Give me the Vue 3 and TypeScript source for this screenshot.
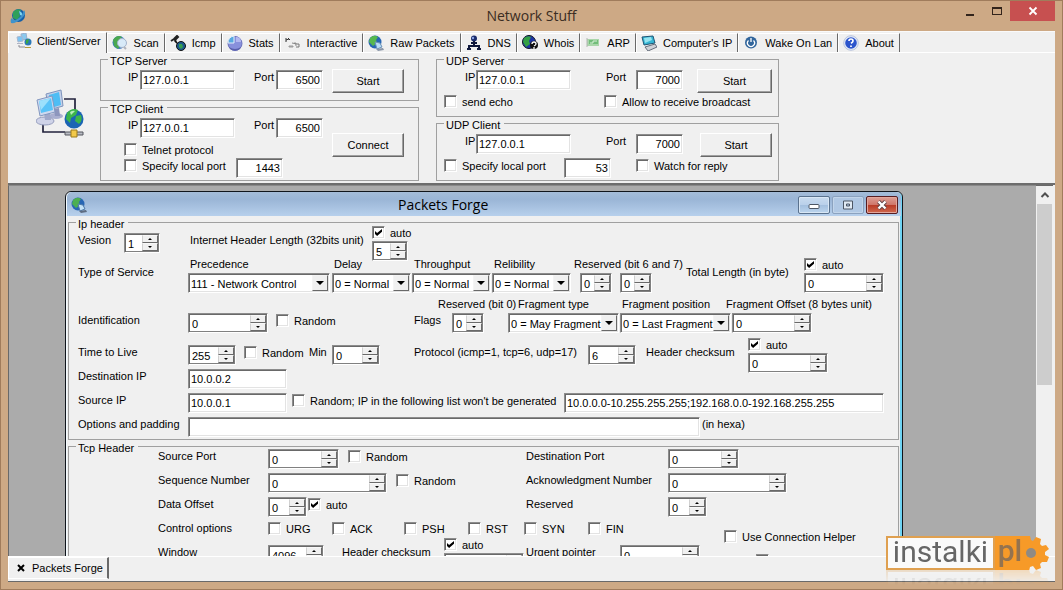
<script setup lang="ts">
import { defineComponent, h, ref } from 'vue'

interface Tab {
  id: string
  label: string
}

const tabs: Tab[] = [
  { id: 'client', label: 'Client/Server' },
  { id: 'scan', label: 'Scan' },
  { id: 'icmp', label: 'Icmp' },
  { id: 'stats', label: 'Stats' },
  { id: 'interactive', label: 'Interactive' },
  { id: 'raw', label: 'Raw Packets' },
  { id: 'dns', label: 'DNS' },
  { id: 'whois', label: 'Whois' },
  { id: 'arp', label: 'ARP' },
  { id: 'ip', label: "Computer's IP" },
  { id: 'wake', label: 'Wake On Lan' },
  { id: 'about', label: 'About' },
]
const activeTab = ref('client')

// Numeric box with a pair of stacked arrow buttons
const Spin = defineComponent({
  props: { id: { type: String, required: true }, start: { type: Number, default: 0 }, name: String },
  setup(props) {
    const value = ref(props.start)
    return () =>
      h('span', { class: 'spin' }, [
        h('input', {
          id: props.id,
          value: value.value,
          'aria-label': props.name,
          inputmode: 'numeric',
          onInput: (e: Event) => (value.value = Number((e.target as HTMLInputElement).value) || 0),
        }),
        h('span', { class: 'arrows' }, [
          h('button', { class: 'up', type: 'button', 'aria-label': 'Increase', onClick: () => value.value++ }),
          h('button', { class: 'down', type: 'button', 'aria-label': 'Decrease', onClick: () => value.value-- }),
        ]),
      ])
  },
})

const Combo = defineComponent({
  props: { id: { type: String, required: true }, option: { type: String, required: true } },
  setup(props) {
    return () => h('span', { class: 'combo' }, [h('select', { id: props.id }, [h('option', props.option)])])
  },
})

const Check = defineComponent({
  props: { label: { type: String, default: '' }, on: Boolean },
  setup(props) {
    const checked = ref(props.on)
    return () =>
      h('label', { class: 'check' }, [
        h('input', {
          type: 'checkbox',
          checked: checked.value,
          'aria-label': props.label || 'Option',
          onChange: (e: Event) => (checked.value = (e.target as HTMLInputElement).checked),
        }),
        props.label ? h('span', props.label) : null,
      ])
  },
})
</script>

<template>
  <div class="window">
    <header class="titlebar">
      <svg class="app-icon" viewBox="0 0 16 16" aria-hidden="true">
        <circle cx="8.5" cy="7.5" r="6.5" fill="#1560a8" />
        <path d="M3 4Q7 0 11 2L9 5l1 3-3 4-4-2z" fill="#2fa05a" />
        <path d="M9 3q4 1 3 5l-2-1z" fill="#7fd5ee" />
        <path d="M1 15q-1-4 1-5 1 3 4 2 6-3 8-10 3 4-3 9-6 5-10 4z" fill="#3f93cc" />
      </svg>
      <h1>Network Stuff</h1>
      <div class="caption-buttons">
        <button type="button" aria-label="Minimize">
          <svg width="12" height="12" viewBox="0 0 12 12"><path d="M2 9h8v2H2z" fill="#33241b" /></svg>
        </button>
        <button type="button" aria-label="Maximize">
          <svg width="12" height="12" viewBox="0 0 12 12"><path d="M1 2h10v8H1zM2 4v5h8V4z" fill="#33241b" fill-rule="evenodd" /></svg>
        </button>
        <button type="button" class="close" aria-label="Close">
          <svg width="10" height="10" viewBox="0 0 10 10"><path d="M1.5 1.5l7 7M8.5 1.5l-7 7" stroke="#fff" stroke-width="1.8" /></svg>
        </button>
      </div>
    </header>

    <nav class="tabs" role="tablist">
      <button
        v-for="tab in tabs"
        :key="tab.id"
        type="button"
        role="tab"
        class="tab"
        :class="{ active: tab.id === activeTab }"
        :aria-selected="tab.id === activeTab"
        @click="activeTab = tab.id"
      >
        <svg width="16" height="16" viewBox="0 0 16 16" aria-hidden="true">
          <template v-if="tab.id === 'client'">
            <path d="M5 1l5-1 1 6-5 1z" fill="#8ac9ee" stroke="#9ab0cc" />
            <path d="M1 4l5-1 1 5-5 1z" fill="#7cc4f2" stroke="#a8b8d0" />
            <path d="M1 10h6v1H1z" fill="#b0b4c4" />
            <circle cx="12" cy="9" r="3.5" fill="#2a78b8" />
            <path d="M10 7l3-1-1 4-2 1z" fill="#3ba744" />
            <path d="M3 12v2h6" fill="none" stroke="#8a8a94" />
            <path d="M9 14h6v1H9z" fill="#b79c3c" />
          </template>
          <template v-else-if="tab.id === 'scan'">
            <circle cx="7" cy="7.5" r="6.5" fill="#3a78c0" />
            <path d="M1 5q4-6 9-3L7 6l1 5-2 3-4-3z" fill="#4aa84e" />
            <circle cx="10" cy="8" r="4.5" fill="#d8eaf8" stroke="#a4b4cc" />
            <path d="M12 12l2 2" stroke="#b0b4bc" stroke-width="2" />
          </template>
          <template v-else-if="tab.id === 'icmp'">
            <path d="M1 6l3-2M4 4l3-3 1 1-3 3 1 2" fill="none" stroke="#222" stroke-width="2" />
            <path d="M5 6l4 4" stroke="#111" stroke-width="1.5" />
            <circle cx="11" cy="11" r="4.5" fill="#1e5a8c" stroke="#111" />
            <path d="M9 9h3l1 3-2 2-2-2z" fill="#36a050" />
          </template>
          <template v-else-if="tab.id === 'stats'">
            <circle cx="8" cy="8.5" r="7" fill="#8890dc" stroke="#6a70bc" />
            <path d="M2 12q6 4 12 0l-1 2q-5 3-10 0z" fill="#5a60ac" />
            <path d="M7 8H1q0-6 6-7z" fill="#58a8e0" stroke="#e4f0fa" />
            <path d="M9 7V2q5 0 5 5z" fill="#b4b8f0" />
          </template>
          <template v-else-if="tab.id === 'interactive'">
            <path d="M1 5l3-1M1 3v4M3 3l2 2" stroke="#333" />
            <path d="M4 11h4v1H4zM9 8h2v3" fill="#bbb" stroke="#999" />
            <path d="M7 8l5 1" fill="none" stroke="#888" />
            <path d="M12 9h2v3h-3" fill="none" stroke="#777" />
          </template>
          <template v-else-if="tab.id === 'raw'">
            <circle cx="7" cy="7" r="6.5" fill="#2766b4" />
            <path d="M2 3q4-4 8-1L8 5l1 3-4 3-4-4z" fill="#56b84e" />
            <path d="M7 7l5 1 2 4-5 2z" fill="#b8dcf4" stroke="#6a90b8" />
            <path d="M8 14l7-1 1 2-6 1z" fill="#8a96a8" />
          </template>
          <template v-else-if="tab.id === 'dns'">
            <circle cx="8" cy="3.5" r="3" fill="#1c2c6c" />
            <circle cx="7" cy="3" r="1.2" fill="#8ba4e4" />
            <path d="M5 8h6M8 6v5" stroke="#10183c" stroke-width="2" />
            <path d="M3 14v-3h10v3M1 14h4M11 14h4" fill="none" stroke="#10183c" stroke-width="2" />
          </template>
          <template v-else-if="tab.id === 'whois'">
            <circle cx="7" cy="7" r="6.5" fill="#1d35a4" stroke="#112" />
            <path d="M2 3q4-3 7-1l-2 4 1 3-4 3-3-5z" fill="#34a044" />
            <circle cx="12" cy="10" r="4" fill="#111" />
            <path d="M10 9q0-2 2-2t2 2q0 1-2 2M12 12v2" fill="none" stroke="#fff" stroke-width="1.3" />
          </template>
          <template v-else-if="tab.id === 'arp'">
            <path d="M2 4h12v7H2z" fill="#a9d6aa" />
            <path d="M4 5h9v4H4z" fill="#72bd7a" />
            <path d="M5 8h3V6h4" fill="none" stroke="#d8efd8" />
            <path d="M2 3v9" stroke="#b4b4b4" />
          </template>
          <template v-else-if="tab.id === 'ip'">
            <path d="M1 2l11-1 2 7-11 2z" fill="#36b6d4" stroke="#1d5474" />
            <path d="M3 3l7-1 1 3-7 3z" fill="#96e4f0" />
            <path d="M4 12l10-3 2 3-9 4z" fill="#cfd2d8" stroke="#666e7c" />
          </template>
          <template v-else-if="tab.id === 'wake'">
            <circle cx="8" cy="7.5" r="6" fill="#32669c" />
            <path d="M5.5 5.5a3.5 3.5 0 1 0 5 0M8 3v4" fill="none" stroke="#fff" stroke-width="1.3" />
          </template>
          <template v-else>
            <circle cx="8" cy="8" r="7.3" fill="#e6ecf8" stroke="#b9c4dc" />
            <circle cx="8" cy="8" r="5.8" fill="#2c55cc" />
            <path d="M6 6q0-2 2-2t2 2q0 1-2 2.300M8 10.500v1.500" fill="none" stroke="#fff" stroke-width="1.7" />
          </template>
        </svg>
        <span>{{ tab.label }}</span>
      </button>
    </nav>

    <section class="panel">
      <div class="panel-icon">
        <svg width="48" height="52" viewBox="0 0 48 52" aria-hidden="true">
          <path d="M28 10h11v12M7 34v9h22" fill="none" stroke="#22223c" stroke-width="1.7" />
          <ellipse cx="20" cy="27" rx="7" ry="3" fill="#a9afd0" />
          <path d="M18 20l5-1 1 8h-5z" fill="#8d96bd" />
          <path d="M10 5l15-4 2 16-14 4z" fill="#c6d1ea" stroke="#7e94bc" />
          <path d="M13 6l10-3 2 13-10 3z" fill="#4ebdf4" />
          <ellipse cx="9" cy="32" rx="9" ry="4" fill="#cfd3e8" stroke="#959dbd" />
          <path d="M8 24l6-1 1 8H9z" fill="#9fa8ca" />
          <path d="M1 11l15-4 3 16-15 4z" fill="#cfd9ef" stroke="#8297c0" />
          <path d="M3 12l12-3 2 12-12 3z" fill="#58c3f8" />
          <path d="M3 12l12-3-10 12z" fill="#9be0fc" />
          <circle cx="38" cy="30" r="9.5" fill="#1b64b4" />
          <path d="M31 24q5-6 11-3l-2 5-5 3-1 5-4-4zM40 27l5-1q2 6-2 9l-4-3z" fill="#3cb54a" />
          <path d="M34 23q3-2 5-1l-4 4z" fill="#b6ecb8" />
          <path d="M29 43h18v3H29z" fill="#b9bcc4" stroke="#55575e" />
          <path d="M35 41h6v7h-6z" fill="#f2c94a" stroke="#9b7a1b" />
        </svg>
      </div>

      <div class="column tcp">
        <fieldset>
          <legend>TCP Server</legend>
          <div class="link-row">
            <label for="ts-ip">IP</label><input id="ts-ip" class="box" value="127.0.0.1" />
            <label for="ts-port">Port</label><input id="ts-port" class="box num" value="6500" />
            <button type="button" class="push">Start</button>
          </div>
        </fieldset>
        <fieldset class="tall">
          <legend>TCP Client</legend>
          <div class="link-row">
            <label for="tc-ip">IP</label><input id="tc-ip" class="box" value="127.0.0.1" />
            <label for="tc-port">Port</label><input id="tc-port" class="box num" value="6500" />
            <button type="button" class="push lower">Connect</button>
          </div>
          <div class="option-row"><Check label="Telnet protocol" /></div>
          <div class="option-row">
            <Check label="Specify local port" />
            <input class="box num" value="1443" aria-label="TCP local port" />
          </div>
        </fieldset>
      </div>

      <div class="column udp">
        <fieldset>
          <legend>UDP Server</legend>
          <div class="link-row">
            <label for="us-ip">IP</label><input id="us-ip" class="box" value="127.0.0.1" />
            <label for="us-port">Port</label><input id="us-port" class="box num" value="7000" />
            <button type="button" class="push wide">Start</button>
          </div>
          <div class="option-row echo">
            <Check label="send echo" />
            <Check label="Allow to receive broadcast" />
          </div>
        </fieldset>
        <fieldset>
          <legend>UDP Client</legend>
          <div class="link-row">
            <label for="uc-ip">IP</label><input id="uc-ip" class="box" value="127.0.0.1" />
            <label for="uc-port">Port</label><input id="uc-port" class="box num" value="7000" />
            <button type="button" class="push">Start</button>
          </div>
          <div class="option-row local">
            <Check label="Specify local port" />
            <input class="box num" value="53" aria-label="UDP local port" />
            <Check label="Watch for reply" />
          </div>
        </fieldset>
      </div>
    </section>

    <main class="mdi">
      <div class="desktop">
        <section class="child">
          <header class="child-title">
            <svg width="16" height="16" viewBox="0 0 16 16" aria-hidden="true">
              <circle cx="7" cy="7" r="6.5" fill="#2766b4" />
              <path d="M2 3q4-4 8-1L8 5l1 3-4 3-4-4z" fill="#4caf50" />
              <path d="M7 7l5 1 2 4-5 2z" fill="#c4e2f6" stroke="#4d78a8" />
              <path d="M8 14l7-1 1 2-6 1z" fill="#5e6d82" />
            </svg>
            <h2>Packets Forge</h2>
            <div class="child-buttons">
              <button type="button" aria-label="Minimize window">
                <svg width="12" height="10" viewBox="0 0 12 10"><rect x="1" y="4.5" width="10" height="4" rx="1" fill="#fff" stroke="#4c5664" /></svg>
              </button>
              <button type="button" class="dim" aria-label="Maximize window">
                <svg width="12" height="10" viewBox="0 0 12 10"><path d="M1.500 1h9v8h-9zM4.500 4h3v2h-3z" fill="#e0eaf4" fill-rule="evenodd" stroke="#4c5664" /></svg>
              </button>
              <button type="button" class="close" aria-label="Close window">
                <svg width="12" height="10" viewBox="0 0 12 10"><path d="M2.500 1.500l7 7M9.500 1.500l-7 7" stroke="#5c4044" stroke-width="4" /><path d="M2.500 1.500l7 7M9.500 1.500l-7 7" stroke="#fff" stroke-width="2.4" /></svg>
              </button>
            </div>
          </header>

          <fieldset class="ip">
            <legend>Ip header</legend>
            <div class="rows">
              <div class="row half r-version">
                <label for="version">Vesion</label>
                <Spin id="version" class="w36" :start="1" />
                <label for="ihl">Internet Header Length (32bits unit)</label>
                <div class="stack"><Check label="auto" on /><Spin id="ihl" class="w36" :start="5" /></div>
              </div>
              <div class="row half tall r-service">
                <span>Type of Service</span>
                <div class="stack"><label for="prec">Precedence</label><Combo id="prec" class="w142" option="111 - Network Control" /></div>
                <div class="stack"><label for="delay">Delay</label><Combo id="delay" class="w79" option="0 = Normal" /></div>
                <div class="stack"><label for="thru">Throughput</label><Combo id="thru" class="w79" option="0 = Normal" /></div>
                <div class="stack"><label for="rel">Relibility</label><Combo id="rel" class="w79" option="0 = Normal" /></div>
                <div class="stack">
                  <label for="bit6">Reserved (bit 6 and 7)</label>
                  <div class="pair"><Spin id="bit6" class="w32" /><Spin id="bit7" class="w32" name="Reserved bit 7" /></div>
                </div>
                <label class="inset" for="total">Total Length (in byte)</label>
                <div class="stack"><Check label="auto" on /><Spin id="total" class="w80" /></div>
              </div>
              <div class="row full tall r-ident">
                <label for="ident">Identification</label>
                <Spin id="ident" class="w80" />
                <Check label="Random" />
                <span>Flags</span>
                <div class="stack reserved"><label for="bit0">Reserved (bit 0)</label><Spin id="bit0" class="w32" /></div>
                <div class="stack kind"><label for="ftype">Fragment type</label><Combo id="ftype" class="w111" option="0 = May Fragment" /></div>
                <div class="stack"><label for="fpos">Fragment position</label><Combo id="fpos" class="w111" option="0 = Last Fragment" /></div>
                <div class="stack offset"><label for="foff">Fragment Offset (8 bytes unit)</label><Spin id="foff" class="w80" /></div>
              </div>
              <div class="row half r-ttl">
                <label for="ttl">Time to Live</label>
                <Spin id="ttl" class="w48" :start="255" />
                <Check label="Random" />
                <label for="min">Min</label>
                <Spin id="min" class="w48" />
                <label for="proto">Protocol (icmp=1, tcp=6, udp=17)</label>
                <Spin id="proto" class="w48" :start="6" />
                <label for="ipsum">Header checksum</label>
                <div class="stack"><Check label="auto" on /><Spin id="ipsum" class="w80" /></div>
              </div>
              <div class="row r-dest">
                <label for="dest">Destination IP</label>
                <input id="dest" class="box" value="10.0.0.2" />
              </div>
              <div class="row r-source">
                <label for="source">Source IP</label>
                <input id="source" class="box" value="10.0.0.1" />
                <Check label="Random; IP in the following list won't be generated" />
                <input class="box" value="10.0.0.0-10.255.255.255;192.168.0.0-192.168.255.255" aria-label="Excluded IP ranges" />
              </div>
              <div class="row r-options">
                <label for="options">Options and padding</label>
                <input id="options" class="box" value="" />
                <span class="inset">(in hexa)</span>
              </div>
            </div>
          </fieldset>

          <fieldset class="tcp-header">
            <legend>Tcp Header</legend>
            <div class="rows">
              <div class="row r-port">
                <label for="sport">Source Port</label>
                <Spin id="sport" class="w71" />
                <Check label="Random" />
                <label for="dport">Destination Port</label>
                <Spin id="dport" class="w71" />
              </div>
              <div class="row r-seq">
                <label for="seq">Sequence Number</label>
                <Spin id="seq" class="w119" />
                <Check label="Random" />
                <label for="ack">Acknowledgment Number</label>
                <Spin id="ack" class="w119" />
              </div>
              <div class="row r-data">
                <label for="data">Data Offset</label>
                <Spin id="data" class="w39" />
                <Check label="auto" on />
                <label for="res">Reserved</label>
                <Spin id="res" class="w39" />
              </div>
              <div class="row short r-control">
                <span>Control options</span>
                <Check label="URG" />
                <Check label="ACK" />
                <Check label="PSH" />
                <Check label="RST" />
                <Check label="SYN" />
                <Check label="FIN" />
                <Check class="helper" label="Use Connection Helper" />
              </div>
              <div class="row half r-window">
                <label for="window">Window</label>
                <Spin id="window" class="w56" :start="4096" />
                <label for="tcpsum">Header checksum</label>
                <div class="stack"><Check label="auto" on /><Spin id="tcpsum" class="w80" /></div>
                <label for="urgent">Urgent pointer</label>
                <Spin id="urgent" class="w80" />
                <Check class="last" />
              </div>
            </div>
          </fieldset>
        </section>
      </div>
      <div class="scrollbar">
        <button type="button" aria-label="Scroll up">
          <svg width="10" height="8" viewBox="0 0 10 8"><path d="M1.500 6L5 2.500 8.500 6" fill="none" stroke="#505050" stroke-width="2" /></svg>
        </button>
        <div class="thumb"></div>
      </div>
    </main>

    <footer class="taskbar">
      <button type="button" class="task">
        <svg width="8" height="8" viewBox="0 0 8 8" aria-hidden="true"><path d="M1 1l6 6M7 1L1 7" stroke="#000" stroke-width="2" /></svg>
        <span>Packets Forge</span>
      </button>
    </footer>

    <div class="badge">
      <span class="badge-name">instalki</span>
      <span class="badge-tld">pl</span>
      <svg width="26" height="34" viewBox="0 0 26 34" aria-hidden="true">
        <path
          d="M0 0h5l1 4 2 1 3-4 5 2-1 5 2 2 4-1 3 4-4 3v3l4 2-2 5-5 0-2 2 1 4-5 2-3-4-3 1-1 4H0z"
          fill="#f79a28"
        />
        <circle cx="6" cy="17" r="5" fill="#8f8a84" />
      </svg>
    </div>
  </div>
</template>

<style>
body {
  margin: 0;
  background: #cda985;
}

.spin,
.combo,
.box {
  box-sizing: border-box;
  height: 20px;
  background: #fff;
  border: 1px solid;
  border-color: #8c8c8c #fff #fff #8c8c8c;
  box-shadow: inset 1px 1px #696969, inset -1px -1px #e3e3e3;
}

.spin,
.combo {
  display: flex;
  padding: 1px;
}

.spin {
  box-shadow: inset 1px 1px #696969, inset -1px -1px #808080;
}

.spin input,
.combo select {
  flex: 1;
  min-width: 0;
  width: 0;
  padding: 2px 0 0 2px;
  border: 0;
  background: none;
  outline: 0;
  font: inherit;
  color: #000;
}

.combo select {
  appearance: none;
  width: 100%;
  padding: 1px 0 0 1px;
}

.combo {
  position: relative;
}

.combo::before {
  content: '';
  position: absolute;
  right: 1px;
  top: 1px;
  bottom: 1px;
  width: 16px;
  box-sizing: border-box;
  background: #f0f0f0;
  border: 1px solid;
  border-color: #f4f4f4 #696969 #696969 #f4f4f4;
  pointer-events: none;
}

.combo::after {
  content: '';
  position: absolute;
  right: 5px;
  top: 7px;
  border: 4px solid transparent;
  border-top-color: #000;
  border-bottom: 0;
  pointer-events: none;
}

.arrows {
  display: flex;
  flex-direction: column;
  width: 16px;
}

.arrows button {
  flex: 1;
  display: flex;
  align-items: center;
  justify-content: center;
  min-height: 0;
  padding: 0;
  background: #f0f0f0;
  border: 1px solid;
  border-color: #f8f8f8 #696969 #696969 #d0d0d0;
}

.arrows button::before {
  content: '';
  border: 2px solid transparent;
}

.arrows .up::before {
  border-bottom-color: #000;
  border-top: 0;
}

.arrows .down::before {
  border-top-color: #000;
  border-bottom: 0;
}

.check {
  display: flex;
  align-items: flex-start;
  gap: 5px;
  height: 15px;
  padding-top: 1px;
  line-height: 14px;
  white-space: nowrap;
}

.check input {
  appearance: none;
  box-sizing: border-box;
  flex: none;
  width: 13px;
  height: 13px;
  margin: 0;
  background: #fff;
  border: 1px solid;
  border-color: #8c8c8c #fff #fff #8c8c8c;
  box-shadow: inset 1px 1px #696969, inset -1px -1px #e3e3e3;
}

.check input:checked::before {
  content: '';
  display: block;
  width: 7px;
  height: 7px;
  margin: 2px;
  background: #000;
  clip-path: polygon(0 28%, 30% 58%, 100% 0, 100% 40%, 30% 100%, 0 70%);
}
</style>

<style scoped>
.window {
  position: relative;
  display: flex;
  flex-direction: column;
  box-sizing: border-box;
  height: 100vh;
  min-height: 400px;
  padding: 0 8px 8px;
  overflow: hidden;
  background: #cda985;
  box-shadow: inset 0 0 0 1px #a07c5c;
  font: 11px/14px 'Liberation Sans', Arial, sans-serif;
  color: #000;
}

button,
input {
  font: inherit;
  color: inherit;
}

h1,
h2 {
  margin: 0;
  font-family: 'Open Sans', 'Noto Sans', sans-serif;
  font-weight: 400;
}

/* Main title bar */
.titlebar {
  display: grid;
  grid-template-columns: 1fr auto 1fr;
  align-items: center;
  flex: none;
  height: 31px;
}

.app-icon {
  width: 16px;
  height: 16px;
  margin-left: 2px;
}

h1 {
  font-size: 14px;
  line-height: 20px;
  color: #3a2c22;
}

.caption-buttons {
  display: flex;
  align-self: start;
  justify-self: end;
  margin-top: 1px;
}

.caption-buttons button {
  display: flex;
  align-items: center;
  justify-content: center;
  width: 27px;
  height: 20px;
  padding: 0;
  border: 0;
  background: none;
}

.caption-buttons .close {
  width: 45px;
  background: #c75050;
}

/* Tab strip */
.tabs {
  display: flex;
  flex: none;
  height: 22px;
  box-sizing: border-box;
  background: #f0f0f0;
  border-top: 1px solid #fafafa;
  border-bottom: 1px solid #fff;
}

.tab {
  display: flex;
  align-items: center;
  gap: 6px;
  box-sizing: border-box;
  margin: 1px 0 0;
  padding: 0 5px 0 4px;
  border: 1px solid;
  border-color: #fff #696969 transparent #fff;
  border-bottom: 0;
  background: #f0f0f0;
  white-space: nowrap;
}

.tab.active {
  margin: 0 0 -1px;
  padding: 0 5px 4px 7px;
  gap: 5px;
}

/* Client/server page */
.panel {
  display: flex;
  flex: none;
  padding-bottom: 2px;
  background: #f0f0f0;
  border-bottom: 2px solid #6d6d6d;
}

.panel-icon {
  display: flex;
  align-items: center;
  justify-content: center;
  width: 92px;
  padding: 0 0 4px 12px;
  box-sizing: border-box;
}

fieldset {
  box-sizing: border-box;
  min-width: 0;
  margin: 0;
  padding: 0;
  border: 1px solid #a0a0a0;
}

legend {
  height: 13px;
  margin-left: 7px;
  padding: 0 4px 0 2px;
  line-height: 16px;
}

.tcp fieldset {
  min-height: 48px;
}

.tcp fieldset.tall {
  min-height: 80px;
}

.udp fieldset {
  min-height: 64px;
}

.tcp {
  width: 319px;
}

.udp {
  width: 343px;
  margin-left: 17px;
}

.link-row {
  display: grid;
  align-items: start;
  height: 24px;
  padding-top: 4px;
  white-space: nowrap;
}

.tcp .link-row {
  grid-template-columns: 12px 114px 22px 56px 72px;
  padding-left: 27px;
}

.udp .link-row {
  grid-template-columns: 11px 130px 30px 61px 75px;
  padding-left: 28px;
}

.link-row .box {
  width: 95px;
}

.link-row .box.num,
.option-row .box {
  width: 47px;
}

.box {
  padding: 0 2px;
}

.num {
  text-align: right;
}

.push {
  justify-self: end;
  width: 72px;
  height: 24px;
  margin-top: -1px;
  padding: 0;
  background: #f0f0f0;
  border: 1px solid;
  border-color: #fff #696969 #696969 #fff;
  box-shadow: inset -1px -1px #a0a0a0;
}

.push.wide {
  width: 75px;
}

.push.lower {
  margin-top: 15px;
}

.option-row {
  display: grid;
  grid-template-columns: 112px auto;
  justify-content: start;
  align-items: start;
  height: 16px;
  padding-left: 23px;
}

.udp .option-row {
  grid-template-columns: 160px auto;
  padding-left: 7px;
}

.udp .local {
  grid-template-columns: 120px 72px auto;
}

/* Document area */
.mdi {
  display: flex;
  flex: 1;
  min-height: 0;
  padding-right: 2px;
  background: #f0f0f0;
}

.desktop {
  position: relative;
  flex: 1;
  min-width: 0;
  overflow: hidden;
  background: #ababab;
  border-top: 1px solid #8a8a8a;
  border-left: 1px solid #696969;
}

.scrollbar {
  display: flex;
  flex-direction: column;
  width: 17px;
  border-top: 1px solid #696969;
}

.scrollbar button {
  display: flex;
  align-items: center;
  justify-content: center;
  height: 18px;
  padding: 0;
  border: 0;
  background: #f0f0f0;
}

.thumb {
  height: 49%;
  margin: 0 1px;
  background: #cdcdcd;
}

.child {
  position: absolute;
  top: 5px;
  left: 56px;
  width: 838px;
  box-sizing: border-box;
  padding: 0 3px 0 2px;
  background: #f0f0f0;
  border: 1px solid #10151c;
  border-radius: 6px 6px 0 0;
  box-shadow: inset 1px 1px #f4fbff, inset -2px 0 #6fd4f4;
}

.child-title {
  display: grid;
  grid-template-columns: 327px auto 1fr;
  align-items: center;
  height: 24px;
  margin: 0 -2px 0 -1px;
  padding: 1px 3px 0 4px;
  border-radius: 5px 5px 0 0;
  box-sizing: border-box;
  background: linear-gradient(#a4bcd8, #9ab5d6 30%, #b7d0ec);
}

h2 {
  font-size: 14px;
  line-height: 20px;
}

.child-buttons {
  display: flex;
  justify-self: end;
  gap: 2px;
}

.child-buttons button {
  display: flex;
  align-items: center;
  justify-content: center;
  width: 32px;
  height: 18px;
  padding: 0;
  border: 1px solid #5a728e;
  border-radius: 2px;
  background: linear-gradient(#c9dbef, #b9d0ea 50%, #a3bfde 50%, #bcd5ee);
  box-shadow: inset 0 0 0 1px #d9e7f5;
}

.child-buttons .dim {
  border-color: #8ba2bf;
  background: #b0c8e4;
  box-shadow: inset 0 0 0 1px #c2d5ea;
}

.child-buttons .close {
  border-color: #571d22;
  background: linear-gradient(#dc9f96, #cf7568 50%, #b83a26 50%, #d0694e);
  box-shadow: inset 0 0 0 1px #e3a69b;
}

.ip {
  height: 224px;
}

.rows {
  margin-top: -4px;
  padding: 0 14px 0 9px;
}

.tcp-header .rows {
  padding-left: 89px;
}

.row {
  display: grid;
  align-items: start;
  height: 24px;
  white-space: nowrap;
}

.row.half {
  height: 32px;
}

.row.tall {
  height: 40px;
}

.row.short {
  height: 16px;
}

.row.half > :not(.stack) {
  margin-top: 8px;
}

.row.full > :not(.stack) {
  margin-top: 16px;
}

.row .inset {
  padding-left: 2px;
}

.stack {
  display: flex;
  flex-direction: column;
  min-width: 0;
}

.stack > label:not(.check) {
  height: 16px;
  padding-left: 2px;
}

.pair {
  display: flex;
  gap: 8px;
  padding-left: 8px;
}

.r-version { grid-template-columns: 46px 66px 182px auto; }
.r-service { grid-template-columns: 110px 144px 80px 80px 80px 112px 120px auto; }
.r-ident { grid-template-columns: 110px 88px 138px 22px 72px 112px 104px auto; }
.r-ttl { grid-template-columns: 110px 56px 65px 23px 82px 174px 58px 102px auto; }
.r-dest { grid-template-columns: 110px 99px; }
.r-source { grid-template-columns: 110px 104px 272px 1fr; }
.r-options { grid-template-columns: 110px 512px auto; }
.r-port { grid-template-columns: 110px 80px 178px 142px auto; }
.r-seq { grid-template-columns: 110px 128px 130px 142px auto; }
.r-data { grid-template-columns: 110px 40px 218px 142px auto; }
.r-control { grid-template-columns: 110px 64px 72px 64px 56px 64px 136px auto; }
.r-window { grid-template-columns: 110px 74px 102px 82px 94px 136px auto; }

#source {
  width: 99px;
}

.reserved > label {
  width: 78px;
  overflow: hidden;
}

.reserved .spin {
  margin-left: 16px;
}

.kind > label:not(.check) {
  padding-left: 10px;
}

.offset .spin {
  margin-left: 8px;
}

.row .helper {
  margin-top: 8px;
}

.row.half > .last {
  margin-top: 16px;
}

.w32 { width: 32px; }
.w36 { width: 36px; }
.w39 { width: 39px; }
.w48 { width: 48px; }
.w56 { width: 56px; }
.w71 { width: 71px; }
.w79 { width: 79px; }
.w80 { width: 80px; }
.w111 { width: 111px; }
.w119 { width: 119px; }
.w142 { width: 142px; }

/* Window list */
.taskbar {
  display: flex;
  flex: none;
  height: 26px;
  box-sizing: border-box;
  padding-bottom: 2px;
  background: #f0f0f0;
  border-top: 1px solid #fff;
  border-bottom: 1px solid #696969;
}

.task {
  display: flex;
  align-items: center;
  gap: 7px;
  padding: 0 4px 0 8px;
  background: #f0f0f0;
  border: 1px solid;
  border-color: #fff #696969 #fff #fff;
  border-right-width: 2px;
}

/* Corner badge */
.badge {
  position: absolute;
  right: 12px;
  bottom: 20px;
  display: flex;
  height: 34px;
  -webkit-box-reflect: below 0 linear-gradient(transparent 55%, rgba(0, 0, 0, 0.25));
}

.badge-name {
  box-sizing: border-box;
  width: 109px;
  border: 2px solid #dfa050;
  background: #fafafa;
  font: 30px/28px Roboto, sans-serif;
  text-align: center;
  color: #666;
}

.badge-tld {
  width: 30px;
  background: #f79a28;
  font: 500 30px/30px Roboto, sans-serif;
  text-align: center;
  color: #94734f;
}
</style>
